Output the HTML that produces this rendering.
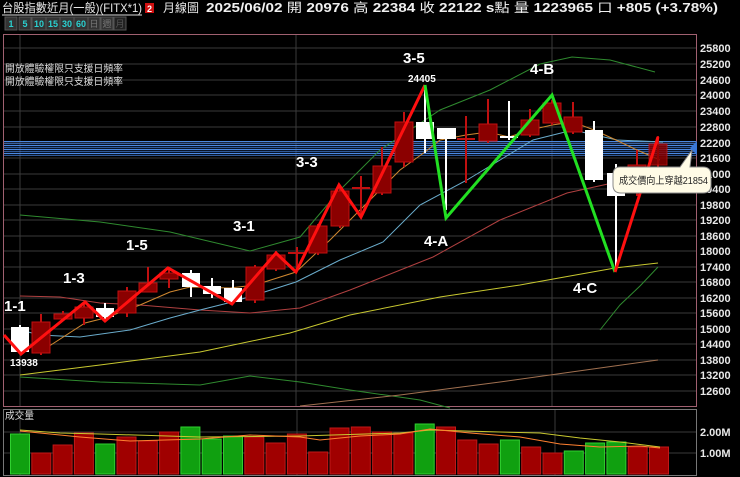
<!DOCTYPE html>
<html><head><meta charset="utf-8"><style>
html,body{margin:0;padding:0;background:#000;width:740px;height:477px;overflow:hidden;font-family:"Liberation Sans","Noto Sans CJK TC",sans-serif}
</style></head><body>
<svg width="740" height="477" viewBox="0 0 740 477" xmlns="http://www.w3.org/2000/svg" style="position:absolute;left:0;top:0">
<rect width="740" height="477" fill="#000"/>
<!-- header -->
<text x="2" y="12" fill="#e8e8e8" font-size="12" textLength="140" lengthAdjust="spacingAndGlyphs" font-family="Liberation Sans,Noto Sans CJK TC,sans-serif">台股指數近月(一般)(FITX*1)</text>
<line x1="2" y1="15" x2="142" y2="15" stroke="#ddd" stroke-width="1"/>
<rect x="145" y="3" width="9" height="10" fill="#d01010"/>
<text x="147" y="12" fill="#fff" font-size="9" font-weight="bold">2</text>
<text x="163" y="12" fill="#e8e8e8" font-size="12" textLength="36" lengthAdjust="spacingAndGlyphs" font-family="Liberation Sans,Noto Sans CJK TC,sans-serif">月線圖</text>
<text x="206" y="12" fill="#f0f0f0" font-size="12.5" font-weight="bold" textLength="512" lengthAdjust="spacingAndGlyphs" font-family="Liberation Sans,Noto Sans CJK TC,sans-serif">2025/06/02 <tspan font-weight="normal">開</tspan> 20976 <tspan font-weight="normal">高</tspan> 22384 <tspan font-weight="normal">收</tspan> 22122 s<tspan font-weight="normal">點 量</tspan> 1223965 <tspan font-weight="normal">口</tspan>  +805 (+3.78%)</text>
<!-- buttons -->
<g font-size="9" font-weight="bold" text-anchor="middle">
<rect x="5" y="17" width="12" height="13" fill="#333" stroke="#555"/><text x="11" y="27" fill="#2bd0d0">1</text>
<rect x="19" y="17" width="12" height="13" fill="#333" stroke="#555"/><text x="25" y="27" fill="#2bd0d0">5</text>
<rect x="32" y="17" width="14" height="13" fill="#333" stroke="#555"/><text x="39" y="27" fill="#2bd0d0">10</text>
<rect x="46" y="17" width="14" height="13" fill="#333" stroke="#555"/><text x="53" y="27" fill="#2bd0d0">15</text>
<rect x="60" y="17" width="14" height="13" fill="#333" stroke="#555"/><text x="67" y="27" fill="#2bd0d0">30</text>
<rect x="74" y="17" width="14" height="13" fill="#333" stroke="#555"/><text x="81" y="27" fill="#2bd0d0">60</text>
<rect x="88" y="17" width="12" height="13" fill="#333" stroke="#555"/><text x="94" y="27" fill="#777" font-weight="normal">日</text>
<rect x="101" y="17" width="12" height="13" fill="#333" stroke="#555"/><text x="107" y="27" fill="#777" font-weight="normal">週</text>
<rect x="114" y="17" width="12" height="13" fill="#222" stroke="#555"/><text x="120" y="27" fill="#555" font-weight="normal">月</text>
</g>
<!-- frames -->
<rect x="3.5" y="34.5" width="693" height="372" fill="none" stroke="#a06070" stroke-width="1"/>
<rect x="3.5" y="409.5" width="693" height="66" fill="none" stroke="#777" stroke-width="1"/>
<!-- grid -->
<g stroke="#3a3a3a" stroke-width="1">
<line x1="4" y1="48" x2="696" y2="48"/><line x1="4" y1="64" x2="696" y2="64"/><line x1="4" y1="80" x2="696" y2="80"/><line x1="4" y1="95" x2="696" y2="95"/><line x1="4" y1="111" x2="696" y2="111"/><line x1="4" y1="127" x2="696" y2="127"/><line x1="4" y1="143" x2="696" y2="143"/><line x1="4" y1="158" x2="696" y2="158"/><line x1="4" y1="174" x2="696" y2="174"/><line x1="4" y1="189" x2="696" y2="189"/><line x1="4" y1="205" x2="696" y2="205"/><line x1="4" y1="220" x2="696" y2="220"/><line x1="4" y1="236" x2="696" y2="236"/><line x1="4" y1="251" x2="696" y2="251"/><line x1="4" y1="267" x2="696" y2="267"/><line x1="4" y1="282" x2="696" y2="282"/><line x1="4" y1="298" x2="696" y2="298"/><line x1="4" y1="313" x2="696" y2="313"/><line x1="4" y1="329" x2="696" y2="329"/><line x1="4" y1="344" x2="696" y2="344"/><line x1="4" y1="360" x2="696" y2="360"/><line x1="4" y1="375" x2="696" y2="375"/><line x1="4" y1="391" x2="696" y2="391"/>
<line x1="20" y1="35" x2="20" y2="406"/><line x1="296" y1="35" x2="296" y2="406"/><line x1="552" y1="35" x2="552" y2="406"/>
<line x1="4" y1="432" x2="696" y2="432"/><line x1="4" y1="453" x2="696" y2="453"/>
<line x1="20" y1="410" x2="20" y2="475"/><line x1="297" y1="410" x2="297" y2="475"/><line x1="555" y1="410" x2="555" y2="475"/>
</g>
<!-- axis labels -->
<g fill="#e8e8e8" font-size="11" font-weight="bold">
<text x="700" y="52">25800</text><text x="700" y="68">25200</text><text x="700" y="84">24600</text><text x="700" y="99">24000</text><text x="700" y="115">23400</text><text x="700" y="131">22800</text><text x="700" y="147">22200</text><text x="700" y="162">21600</text><text x="700" y="178">21000</text><text x="700" y="193">20400</text><text x="700" y="209">19800</text><text x="700" y="224">19200</text><text x="700" y="240">18600</text><text x="700" y="255">18000</text><text x="700" y="271">17400</text><text x="700" y="286">16800</text><text x="700" y="302">16200</text><text x="700" y="317">15600</text><text x="700" y="333">15000</text><text x="700" y="348">14400</text><text x="700" y="364">13800</text><text x="700" y="379">13200</text><text x="700" y="395">12600</text>
<text x="700" y="436">2.00M</text><text x="700" y="457">1.00M</text>
</g>
<g fill="#ddd" font-size="10" font-family="Liberation Sans,Noto Sans CJK TC,sans-serif">
<text x="5" y="72" textLength="118" lengthAdjust="spacingAndGlyphs">開放體驗權限只支援日頻率</text>
<text x="5" y="85" textLength="118" lengthAdjust="spacingAndGlyphs">開放體驗權限只支援日頻率</text>
<text x="5" y="419" textLength="29" lengthAdjust="spacingAndGlyphs">成交量</text>
</g>
<!-- blue band -->
<rect x="4" y="141" width="692" height="15" fill="#1a3a70" opacity="0.35"/>
<g stroke="#4a88e0" stroke-width="1">
<line x1="4" y1="141.5" x2="696" y2="141.5"/><line x1="4" y1="143.5" x2="696" y2="143.5" opacity="0.6"/><line x1="4" y1="145.5" x2="696" y2="145.5"/><line x1="4" y1="147.5" x2="696" y2="147.5" opacity="0.6"/><line x1="4" y1="149.5" x2="696" y2="149.5"/><line x1="4" y1="151.5" x2="696" y2="151.5" opacity="0.6"/><line x1="4" y1="153.5" x2="696" y2="153.5"/><line x1="4" y1="155.5" x2="696" y2="155.5" opacity="0.6"/>
</g>
<polygon points="690,148 697,141 697,155" fill="#3a78d8"/>
<!-- MAs -->
<g fill="none" stroke-width="1">
<polyline stroke="#2f8a2f" points="20,215 100,222 170,232 250,251 300,237 340,190 380,150 440,110 490,90 540,64 572,57 610,60 655,72"/>
<polyline stroke="#2f8a2f" points="20,377 100,382 200,385 250,376 300,382 350,390 420,400 450,408"/>
<polyline stroke="#2f8a2f" points="600,330 620,305 640,286 658,267"/>
<polyline stroke="#c8c830" points="20,375 100,365 200,352 290,333 350,315 440,297 520,285 570,276 615,268 658,263"/>
<polyline stroke="#a07050" points="300,406 400,395 500,382 600,368 658,360"/>
<polyline stroke="#b04040" points="20,296 60,297 100,303 140,305 200,310 250,313 300,308 350,290 433,257 500,220 567,193 617,182 640,178"/>
<polyline stroke="#6aaccc" points="20,330 40,335 80,337 130,330 170,318 200,310 232,302 255,295 296,282 340,260 383,242 420,205 467,180 533,140 573,130 617,140 663,142"/>
<polyline stroke="#d08830" points="40,352 85,323 105,318 140,305 170,292 190,287 230,288 255,285 296,272 330,240 360,210 380,190 400,170 425,152 440,140 466,135 488,132 509,137 530,130 552,125 573,122 594,130 616,140 637,150 660,160"/>
</g>
<!-- candles -->
<g stroke-width="2">
<line x1="20" y1="325" x2="20" y2="352" stroke="#fff"/><rect x="11" y="327" width="18" height="25" fill="#fff"/>
<line x1="41" y1="314" x2="41" y2="355" stroke="#c01010"/><rect x="32" y="322" width="18" height="31" fill="#8b0000" stroke="#c01010" stroke-width="1"/>
<line x1="63" y1="311" x2="63" y2="320" stroke="#c01010"/><rect x="54" y="314" width="18" height="5" fill="#8b0000" stroke="#c01010" stroke-width="1"/>
<line x1="84" y1="302" x2="84" y2="325" stroke="#c01010"/><rect x="75" y="307" width="18" height="11" fill="#8b0000" stroke="#c01010" stroke-width="1"/>
<line x1="105" y1="303" x2="105" y2="320" stroke="#fff"/><rect x="96" y="308" width="18" height="9" fill="#fff"/>
<line x1="127" y1="287" x2="127" y2="317" stroke="#c01010"/><rect x="118" y="291" width="18" height="22" fill="#8b0000" stroke="#c01010" stroke-width="1"/>
<line x1="148" y1="267" x2="148" y2="292" stroke="#c01010"/><rect x="139" y="283" width="18" height="9" fill="#8b0000" stroke="#c01010" stroke-width="1"/>
<line x1="169" y1="267" x2="169" y2="288" stroke="#c01010"/><rect x="160" y="273" width="18" height="6" fill="#8b0000" stroke="#c01010" stroke-width="1"/>
<line x1="191" y1="270" x2="191" y2="297" stroke="#fff"/><rect x="182" y="273" width="18" height="14" fill="#fff"/>
<line x1="212" y1="278" x2="212" y2="298" stroke="#fff"/><rect x="203" y="286" width="18" height="8" fill="#fff"/>
<line x1="233" y1="280" x2="233" y2="302" stroke="#fff"/><rect x="224" y="288" width="18" height="14" fill="#fff"/>
<line x1="255" y1="265" x2="255" y2="303" stroke="#c01010"/><rect x="246" y="267" width="18" height="33" fill="#8b0000" stroke="#c01010" stroke-width="1"/>
<line x1="276" y1="251" x2="276" y2="271" stroke="#c01010"/><rect x="267" y="255" width="18" height="14" fill="#8b0000" stroke="#c01010" stroke-width="1"/>
<line x1="297" y1="247" x2="297" y2="270" stroke="#c01010"/><line x1="288" y1="253" x2="306" y2="253" stroke="#c01010"/>
<line x1="318" y1="224" x2="318" y2="255" stroke="#c01010"/><rect x="309" y="226" width="18" height="27" fill="#8b0000" stroke="#c01010" stroke-width="1"/>
<line x1="340" y1="185" x2="340" y2="228" stroke="#c01010"/><rect x="331" y="191" width="18" height="35" fill="#8b0000" stroke="#c01010" stroke-width="1"/>
<line x1="361" y1="176" x2="361" y2="218" stroke="#c01010"/><line x1="352" y1="188" x2="370" y2="188" stroke="#c01010"/>
<line x1="382" y1="147" x2="382" y2="195" stroke="#c01010"/><rect x="373" y="166" width="18" height="27" fill="#8b0000" stroke="#c01010" stroke-width="1"/>
<line x1="404" y1="112" x2="404" y2="167" stroke="#c01010"/><rect x="395" y="122" width="18" height="40" fill="#8b0000" stroke="#c01010" stroke-width="1"/>
<line x1="425" y1="85" x2="425" y2="153" stroke="#fff"/><rect x="416" y="122" width="18" height="17" fill="#fff"/>
<line x1="446" y1="128" x2="446" y2="210" stroke="#fff"/><rect x="437" y="128" width="19" height="11" fill="#fff"/>
<line x1="466" y1="116" x2="466" y2="183" stroke="#c01010"/><line x1="457" y1="139" x2="475" y2="139" stroke="#c01010"/>
<line x1="488" y1="99" x2="488" y2="143" stroke="#c01010"/><rect x="479" y="124" width="18" height="17" fill="#8b0000" stroke="#c01010" stroke-width="1"/>
<line x1="509" y1="101" x2="509" y2="140" stroke="#fff"/><line x1="500" y1="137" x2="518" y2="137" stroke="#fff"/>
<line x1="530" y1="109" x2="530" y2="137" stroke="#c01010"/><rect x="521" y="120" width="18" height="15" fill="#8b0000" stroke="#c01010" stroke-width="1"/>
<line x1="552" y1="100" x2="552" y2="125" stroke="#c01010"/><rect x="543" y="103" width="18" height="20" fill="#8b0000" stroke="#c01010" stroke-width="1"/>
<line x1="573" y1="102" x2="573" y2="134" stroke="#c01010"/><rect x="564" y="117" width="18" height="15" fill="#8b0000" stroke="#c01010" stroke-width="1"/>
<line x1="594" y1="121" x2="594" y2="182" stroke="#fff"/><rect x="585" y="130" width="18" height="50" fill="#fff"/>
<line x1="616" y1="164" x2="616" y2="271" stroke="#fff"/><rect x="607" y="173" width="18" height="23" fill="#fff"/>
<line x1="637" y1="150" x2="637" y2="196" stroke="#c01010"/><rect x="628" y="165" width="18" height="28" fill="#8b0000" stroke="#c01010" stroke-width="1"/>
<line x1="658" y1="136" x2="658" y2="167" stroke="#c01010"/><rect x="649" y="144" width="18" height="21" fill="#8b0000" stroke="#c01010" stroke-width="1" opacity="0.85"/>
</g>
<!-- wave lines -->
<polyline fill="none" stroke="#ff1010" stroke-width="3" points="4,335 21,354 85,302 105,321 168,268 232,304 276,253 296,272 339,185 361,217 425,85"/>
<polyline fill="none" stroke="#22e022" stroke-width="3" points="425,85 446,218 552,95 615,272"/>
<polyline fill="none" stroke="#ff1010" stroke-width="3" points="615,272 658,137"/>
<!-- wave labels -->
<g fill="#fff" font-size="15" font-weight="bold">
<text x="4" y="311">1-1</text><text x="63" y="283">1-3</text><text x="126" y="250">1-5</text><text x="233" y="231">3-1</text><text x="296" y="167">3-3</text><text x="403" y="63">3-5</text><text x="424" y="246">4-A</text><text x="530" y="74">4-B</text><text x="573" y="293">4-C</text>
</g>
<g fill="#fff" font-size="10" font-weight="bold"><text x="10" y="366">13938</text><text x="408" y="82">24405</text></g>
<!-- tooltip -->
<path d="M620,167 H680 L692,150 L690,167 H703 Q711,167 711,175 V185 Q711,193 703,193 H621 Q613,193 613,185 V175 Q613,167 620,167 Z" fill="#fffbe6" stroke="#888" stroke-width="1"/>
<text x="619" y="184" fill="#222" font-size="10" textLength="89" lengthAdjust="spacingAndGlyphs" font-family="Liberation Sans,Noto Sans CJK TC,sans-serif">成交價向上穿越21854</text>
<!-- volume bars -->
<g stroke-width="1">
<rect x="10.5" y="434" width="19" height="40" fill="#10a010" stroke="#30d030"/>
<rect x="31.8" y="453" width="19" height="21" fill="#a00000" stroke="#c01818"/>
<rect x="53.1" y="445" width="19" height="29" fill="#a00000" stroke="#c01818"/>
<rect x="74.4" y="433" width="19" height="41" fill="#a00000" stroke="#c01818"/>
<rect x="95.7" y="444" width="19" height="30" fill="#10a010" stroke="#30d030"/>
<rect x="117" y="437" width="19" height="37" fill="#a00000" stroke="#c01818"/>
<rect x="138.3" y="441" width="19" height="33" fill="#a00000" stroke="#c01818"/>
<rect x="159.6" y="432" width="19" height="42" fill="#a00000" stroke="#c01818"/>
<rect x="180.9" y="427" width="19" height="47" fill="#10a010" stroke="#30d030"/>
<rect x="202.2" y="439" width="19" height="35" fill="#10a010" stroke="#30d030"/>
<rect x="223.5" y="436" width="19" height="38" fill="#10a010" stroke="#30d030"/>
<rect x="244.8" y="437" width="19" height="37" fill="#a00000" stroke="#c01818"/>
<rect x="266.1" y="443" width="19" height="31" fill="#a00000" stroke="#c01818"/>
<rect x="287.4" y="434" width="19" height="40" fill="#a00000" stroke="#c01818"/>
<rect x="308.7" y="452" width="19" height="22" fill="#a00000" stroke="#c01818"/>
<rect x="330" y="428" width="19" height="46" fill="#a00000" stroke="#c01818"/>
<rect x="351.3" y="427" width="19" height="47" fill="#a00000" stroke="#c01818"/>
<rect x="372.6" y="432" width="19" height="42" fill="#a00000" stroke="#c01818"/>
<rect x="393.9" y="433" width="19" height="41" fill="#a00000" stroke="#c01818"/>
<rect x="415.2" y="424" width="19" height="50" fill="#10a010" stroke="#30d030"/>
<rect x="436.5" y="427" width="19" height="47" fill="#a00000" stroke="#c01818"/>
<rect x="457.8" y="440" width="19" height="34" fill="#a00000" stroke="#c01818"/>
<rect x="479.1" y="444" width="19" height="30" fill="#a00000" stroke="#c01818"/>
<rect x="500.4" y="440" width="19" height="34" fill="#10a010" stroke="#30d030"/>
<rect x="521.7" y="447" width="19" height="27" fill="#a00000" stroke="#c01818"/>
<rect x="543" y="453" width="19" height="21" fill="#a00000" stroke="#c01818"/>
<rect x="564.3" y="451" width="19" height="23" fill="#10a010" stroke="#30d030"/>
<rect x="585.6" y="443" width="19" height="31" fill="#10a010" stroke="#30d030"/>
<rect x="606.9" y="442" width="19" height="32" fill="#10a010" stroke="#30d030"/>
<rect x="628.2" y="447" width="19" height="27" fill="#a00000" stroke="#c01818"/>
<rect x="649.5" y="447" width="19" height="27" fill="#a00000" stroke="#c01818"/>
</g>
<g fill="none" stroke-width="1">
<polyline stroke="#c8c830" points="20,430 60,433 100,434 200,437 300,436 400,433 430,430 500,432 540,433 580,438 620,442 660,447"/>
<polyline stroke="#ff8030" points="20,431 80,437 130,441 200,439 250,435 300,437 320,440 360,436 400,434 430,429 470,433 520,437 560,444 600,447 640,446 660,448"/>
</g>
</svg>
</body></html>
